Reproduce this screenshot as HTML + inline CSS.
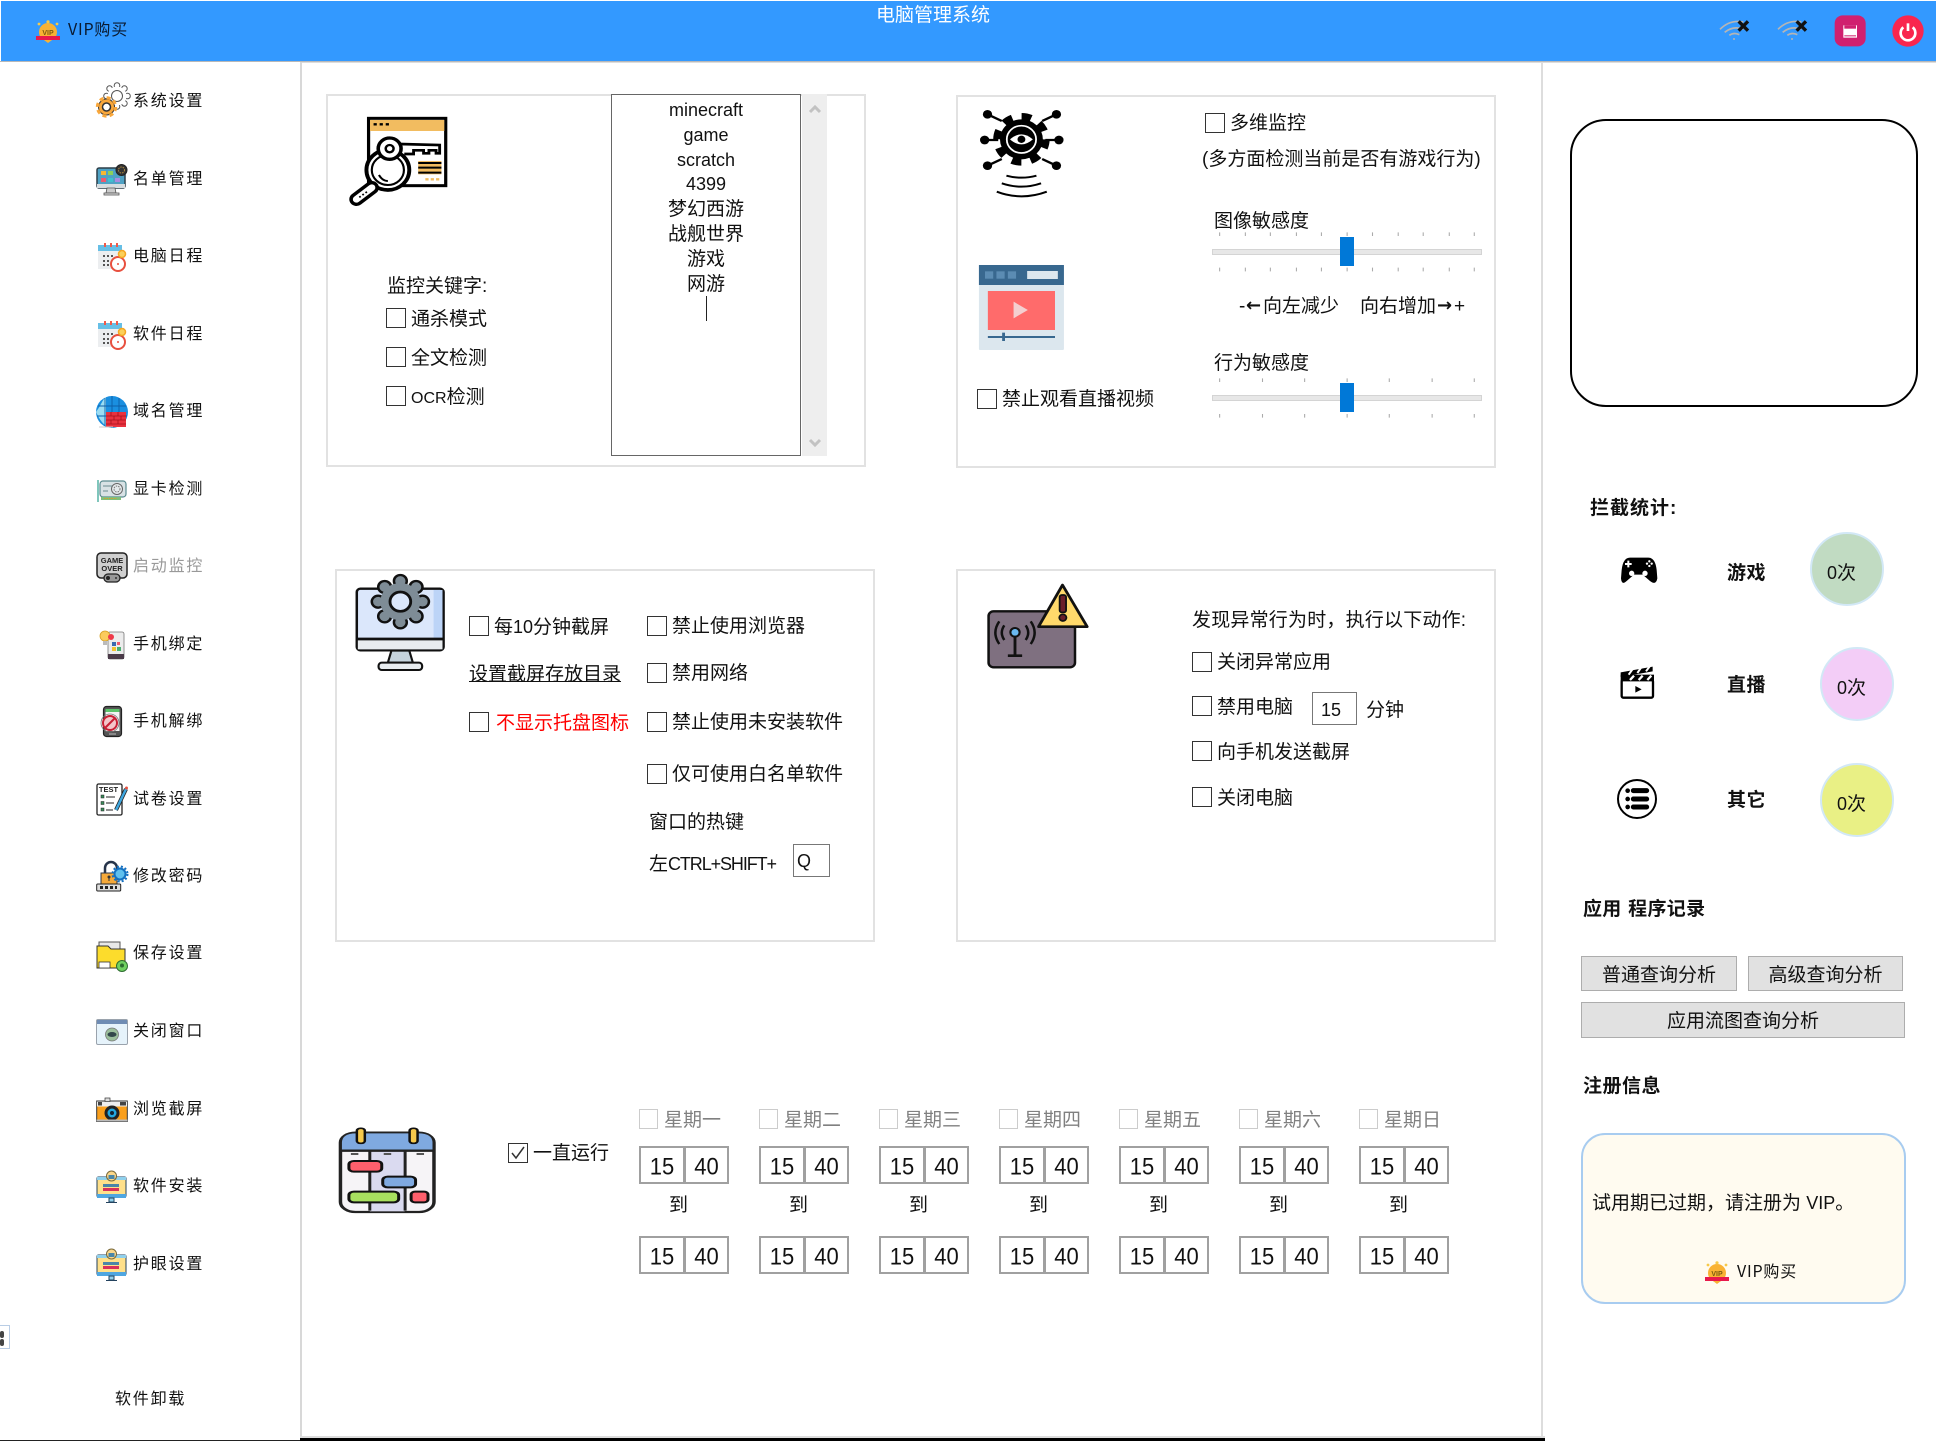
<!DOCTYPE html>
<html lang="zh"><head><meta charset="utf-8"><title>电脑管理系统</title>
<style>
html,body{margin:0;padding:0;background:#fff}
body{position:relative;width:1936px;height:1441px;overflow:hidden;font-family:"Liberation Sans","Noto Sans CJK SC",sans-serif;color:#111}
.t{position:absolute;white-space:nowrap;font-size:19px;line-height:24px;height:24px;margin-top:2px}
.n{position:absolute;left:133px;white-space:nowrap;font:16px/24px "WenQuanYi Zen Hei","Noto Sans CJK SC",sans-serif;letter-spacing:1.8px;color:#111;margin-top:-1px}
.b{font-weight:700}
.l{font-size:18px}
.o{font-size:16px}
.p{position:absolute;border:2px solid #e2e2e2;box-sizing:border-box}
.c{position:absolute;width:20px;height:20px;box-sizing:border-box;border:1.5px solid #333;background:#fff}
.d .c{border-color:#ccc;left:0;top:0;width:19px}
.d{position:absolute;top:1109px;width:100px;height:170px}
.d .t{color:#808080;left:25px;top:-2px}
.tb{position:absolute;left:0;width:90px;height:38px;box-sizing:border-box;border:2px solid #a0a0a0;background:#fff}
.tb i{position:absolute;top:0;left:42px;width:3px;height:34px;background:#a0a0a0}
.tb b{position:absolute;left:0;top:6px;font:22px/26px "Liberation Sans",sans-serif;color:#111;width:42px;text-align:center;transform:scaleY(1.1)}
.tb i+b{left:45px;width:41px}
.dao{position:absolute;left:30px;top:85px;font-size:19px;line-height:24px;color:#111}
.btn{position:absolute;box-sizing:border-box;background:#e1e1e1;border:1.5px solid #adadad;text-align:center;font-size:19px;line-height:33px;color:#111;padding-top:2px}
.in{position:absolute;box-sizing:border-box;border:1.5px solid #777;background:#fff}
.circ{position:absolute;box-sizing:border-box;width:74px;height:74px;border-radius:50%;border:2px solid #d2e8f6}
svg{position:absolute;left:0;top:0}
.a{font-family:"DejaVu Sans",sans-serif;font-weight:700;font-size:18px}
</style></head><body>
<div style="position:absolute;left:1px;top:1px;width:1935px;height:60px;background:#3399ff"></div>
<div style="position:absolute;left:0;top:61px;width:1936px;height:1px;background:#b8b8b8"></div>
<div style="position:absolute;left:300px;top:62px;width:1636px;height:1px;background:#ddd"></div>
<div style="position:absolute;left:300px;top:62px;width:2px;height:1375px;background:#d8d8d8"></div>
<div style="position:absolute;left:1541px;top:62px;width:2px;height:1379px;background:#ddd"></div>
<div style="position:absolute;left:300px;top:1436px;width:1245px;height:2px;background:#ddd"></div>
<div style="position:absolute;left:300px;top:1438px;width:1245px;height:3px;background:#000"></div>
<div style="position:absolute;left:0;top:1440px;width:300px;height:1px;background:#222"></div>

<div class="n" style="left:68px;top:17px;letter-spacing:.8px;color:#0a1a30">VIP购买</div>
<div class="t" style="left:876px;top:2px;font-size:19px;color:#fff">电脑管理系统</div>

<div class="n" style="top:88px">系统设置</div>
<div class="n" style="top:166px">名单管理</div>
<div class="n" style="top:243px">电脑日程</div>
<div class="n" style="top:321px">软件日程</div>
<div class="n" style="top:398px">域名管理</div>
<div class="n" style="top:476px">显卡检测</div>
<div class="n" style="top:553px;color:#999">启动监控</div>
<div class="n" style="top:631px">手机绑定</div>
<div class="n" style="top:708px">手机解绑</div>
<div class="n" style="top:786px">试卷设置</div>
<div class="n" style="top:863px">修改密码</div>
<div class="n" style="top:940px">保存设置</div>
<div class="n" style="top:1018px">关闭窗口</div>
<div class="n" style="top:1096px">浏览截屏</div>
<div class="n" style="top:1173px">软件安装</div>
<div class="n" style="top:1251px">护眼设置</div>
<div class="n" style="left:115px;top:1386px">软件卸载</div>

<div class="p" style="left:326px;top:94px;width:540px;height:373px"></div>
<div style="position:absolute;left:802px;top:94px;width:25px;height:362px;background:#eee"></div>
<div style="position:absolute;left:611px;top:94px;width:190px;height:362px;box-sizing:border-box;border:1.5px solid #666;background:#fff"></div>
<div class="t l" style="left:611px;width:190px;text-align:center;top:96px">minecraft</div>
<div class="t l" style="left:611px;width:190px;text-align:center;top:121px">game</div>
<div class="t l" style="left:611px;width:190px;text-align:center;top:146px">scratch</div>
<div class="t l" style="left:611px;width:190px;text-align:center;top:170px">4399</div>
<div class="t" style="left:611px;width:190px;text-align:center;top:196px">梦幻西游</div>
<div class="t" style="left:611px;width:190px;text-align:center;top:221px">战舰世界</div>
<div class="t" style="left:611px;width:190px;text-align:center;top:246px">游戏</div>
<div class="t" style="left:611px;width:190px;text-align:center;top:271px">网游</div>
<div style="position:absolute;left:706px;top:296px;width:1px;height:25px;background:#222"></div>
<div class="t" style="left:387px;top:273px">监控关键字:</div>
<div class="c" style="left:386px;top:308px"></div><div class="t" style="left:411px;top:306px">通杀模式</div>
<div class="c" style="left:386px;top:347px"></div><div class="t" style="left:411px;top:345px">全文检测</div>
<div class="c" style="left:386px;top:386px"></div><div class="t" style="left:411px;top:384px"><span class="o">OCR</span>检测</div>

<div class="p" style="left:956px;top:95px;width:540px;height:373px"></div>
<div class="c" style="left:1205px;top:113px"></div><div class="t" style="left:1230px;top:110px">多维监控</div>
<div class="t" style="left:1202px;top:146px">(多方面检测当前是否有游戏行为)</div>
<div class="t" style="left:1214px;top:208px">图像敏感度</div>
<div class="t" style="left:1239px;top:293px">-</div><div class="t a" style="left:1246px;top:292px">←</div><div class="t" style="left:1263px;top:293px">向左减少</div>
<div class="t" style="left:1360px;top:293px">向右增加</div><div class="t a" style="left:1437px;top:292px">→</div><div class="t" style="left:1454px;top:293px">+</div>
<div class="t" style="left:1214px;top:350px">行为敏感度</div>
<div class="c" style="left:977px;top:389px"></div><div class="t" style="left:1002px;top:386px">禁止观看直播视频</div>
<div style="position:absolute;left:1212px;top:249px;width:270px;height:6px;box-sizing:border-box;background:#e7e7e7;border:1px solid #d4d4d4"></div>
<div style="position:absolute;left:1340px;top:237px;width:14px;height:29px;background:#0078d7"></div>
<div style="position:absolute;left:1212px;top:395px;width:270px;height:6px;box-sizing:border-box;background:#e7e7e7;border:1px solid #d4d4d4"></div>
<div style="position:absolute;left:1340px;top:383px;width:14px;height:29px;background:#0078d7"></div>

<div class="p" style="left:335px;top:569px;width:540px;height:373px"></div>
<div class="c" style="left:469px;top:616px"></div><div class="t" style="left:494px;top:613px">每<span class="l">10</span>分钟截屏</div>
<div class="t" style="left:469px;top:661px;text-decoration:underline">设置截屏存放目录</div>
<div class="c" style="left:469px;top:712px"></div><div class="t" style="left:496px;top:710px;color:#f00">不显示托盘图标</div>
<div class="c" style="left:647px;top:616px"></div><div class="t" style="left:672px;top:613px">禁止使用浏览器</div>
<div class="c" style="left:647px;top:663px"></div><div class="t" style="left:672px;top:660px">禁用网络</div>
<div class="c" style="left:647px;top:712px"></div><div class="t" style="left:672px;top:709px">禁止使用未安装软件</div>
<div class="c" style="left:647px;top:764px"></div><div class="t" style="left:672px;top:761px">仅可使用白名单软件</div>
<div class="t" style="left:649px;top:809px">窗口的热键</div>
<div class="t" style="left:649px;top:850px">左<span class="l" style="letter-spacing:-1.1px">CTRL+SHIFT+</span></div>
<div class="in" style="left:793px;top:844px;width:37px;height:33px"></div><div class="t l" style="left:797px;top:847px">Q</div>

<div class="p" style="left:956px;top:569px;width:540px;height:373px"></div>
<div class="t" style="left:1192px;top:607px;letter-spacing:.2px">发现异常行为时，执行以下动作:</div>
<div class="c" style="left:1192px;top:652px"></div><div class="t" style="left:1217px;top:649px">关闭异常应用</div>
<div class="c" style="left:1192px;top:696px"></div><div class="t" style="left:1217px;top:694px">禁用电脑</div>
<div class="in" style="left:1312px;top:692px;width:45px;height:33px"></div><div class="t l" style="left:1321px;top:696px">15</div>
<div class="t" style="left:1366px;top:697px">分钟</div>
<div class="c" style="left:1192px;top:741px"></div><div class="t" style="left:1217px;top:739px">向手机发送截屏</div>
<div class="c" style="left:1192px;top:787px"></div><div class="t" style="left:1217px;top:785px">关闭电脑</div>

<div class="c" style="left:508px;top:1143px"></div>
<div class="t" style="left:533px;top:1140px">一直运行</div>

<div class="d" style="left:639px"><div class="c"></div><div class="t">星期一</div><div class="tb" style="top:37px"><b>15</b><i></i><b>40</b></div><div class="dao">到</div><div class="tb" style="top:127px"><b>15</b><i></i><b>40</b></div></div>
<div class="d" style="left:759px"><div class="c"></div><div class="t">星期二</div><div class="tb" style="top:37px"><b>15</b><i></i><b>40</b></div><div class="dao">到</div><div class="tb" style="top:127px"><b>15</b><i></i><b>40</b></div></div>
<div class="d" style="left:879px"><div class="c"></div><div class="t">星期三</div><div class="tb" style="top:37px"><b>15</b><i></i><b>40</b></div><div class="dao">到</div><div class="tb" style="top:127px"><b>15</b><i></i><b>40</b></div></div>
<div class="d" style="left:999px"><div class="c"></div><div class="t">星期四</div><div class="tb" style="top:37px"><b>15</b><i></i><b>40</b></div><div class="dao">到</div><div class="tb" style="top:127px"><b>15</b><i></i><b>40</b></div></div>
<div class="d" style="left:1119px"><div class="c"></div><div class="t">星期五</div><div class="tb" style="top:37px"><b>15</b><i></i><b>40</b></div><div class="dao">到</div><div class="tb" style="top:127px"><b>15</b><i></i><b>40</b></div></div>
<div class="d" style="left:1239px"><div class="c"></div><div class="t">星期六</div><div class="tb" style="top:37px"><b>15</b><i></i><b>40</b></div><div class="dao">到</div><div class="tb" style="top:127px"><b>15</b><i></i><b>40</b></div></div>
<div class="d" style="left:1359px"><div class="c"></div><div class="t">星期日</div><div class="tb" style="top:37px"><b>15</b><i></i><b>40</b></div><div class="dao">到</div><div class="tb" style="top:127px"><b>15</b><i></i><b>40</b></div></div>

<div style="position:absolute;left:1570px;top:119px;width:348px;height:288px;box-sizing:border-box;border:2px solid #000;border-radius:36px"></div>
<div class="t b" style="left:1590px;top:495px;letter-spacing:1px">拦截统计:</div>
<div class="t b" style="left:1727px;top:560px;letter-spacing:.5px">游戏</div>
<div class="t b" style="left:1727px;top:672px;letter-spacing:.5px">直播</div>
<div class="t b" style="left:1727px;top:787px;letter-spacing:.5px">其它</div>
<div class="circ" style="left:1810px;top:532px;background:#c1dbc2"></div><div class="t" style="left:1827px;top:559px"><span class="l">0</span>次</div>
<div class="circ" style="left:1820px;top:647px;background:#f3cdf7"></div><div class="t" style="left:1837px;top:674px"><span class="l">0</span>次</div>
<div class="circ" style="left:1820px;top:763px;background:#e9f085"></div><div class="t" style="left:1837px;top:790px"><span class="l">0</span>次</div>
<div class="t b" style="left:1583px;top:896px;word-spacing:1px;letter-spacing:.3px">应用 程序记录</div>
<div class="btn" style="left:1581px;top:956px;width:156px;height:35px">普通查询分析</div>
<div class="btn" style="left:1748px;top:956px;width:155px;height:35px">高级查询分析</div>
<div class="btn" style="left:1581px;top:1002px;width:324px;height:36px">应用流图查询分析</div>
<div class="t b" style="left:1583px;top:1073px;letter-spacing:.5px">注册信息</div>
<div style="position:absolute;left:1581px;top:1133px;width:325px;height:171px;box-sizing:border-box;border:2px solid #a8ccf0;border-radius:24px;background:#fffbf0"></div>
<div class="t" style="left:1592px;top:1189px">试用期已过期，请注册为 <span class="l">VIP</span>。</div>
<div class="n" style="left:1737px;top:1259px;letter-spacing:.8px">VIP购买</div>

<div style="position:absolute;left:0;top:1325px;width:10px;height:24px;box-sizing:border-box;border:1px solid #b9cde5;border-left:0;background:#fff"></div>

<svg width="1936" height="1441" viewBox="0 0 1936 1441" fill="none">
<defs>
<g id="vip"><circle cx="12" cy="12" r="9" fill="#f9b233"/><circle cx="3" cy="4" r="1.400" fill="#f7c948"/><circle cx="21" cy="4" r="1.400" fill="#f7c948"/><circle cx="12" cy="1.800" r="1.600" fill="#f7c948"/><text x="12" y="15" font-family="Liberation Sans" font-size="7" font-weight="700" text-anchor="middle" fill="#7a5a10">VIP</text><path d="M0 16h24v4h-24z" fill="#e8194b"/><path d="M8 20h8l-4 3z" fill="#f9b233"/></g>
<g id="cal"><rect x="1" y="3" width="24" height="24" fill="#eceef0"/><rect x="1" y="3" width="24" height="6" fill="#66bfe6"/><path d="M8 1v4M14 1v4M20 1v4" stroke="#ef5a4a" stroke-width="2"/><g fill="#555"><rect x="6" y="13" width="2" height="2"/><rect x="10" y="13" width="2" height="2"/><rect x="14" y="13" width="2" height="2"/><rect x="6" y="18" width="2" height="2"/><rect x="10" y="18" width="2" height="2"/><rect x="6" y="22" width="2" height="2"/><rect x="10" y="22" width="2" height="2"/></g><circle cx="21" cy="22" r="7" fill="#fff" stroke="#e8503f" stroke-width="2"/><circle cx="21" cy="22" r="1" fill="#e8503f"/><circle cx="25" cy="12" r="3.500" fill="#fbd05a" stroke="#f5a623" stroke-width="1.500"/></g>
<g id="mon"><rect x="1" y="6" width="29" height="20" rx="1.500" fill="#ffe08a" stroke="#23425e" stroke-width="1"/><rect x="1" y="6" width="29" height="3" fill="#8fd0ec"/><rect x="1" y="23" width="29" height="4" fill="#4fa6e0"/><rect x="7" y="13" width="16" height="3" fill="#4a86a8"/><rect x="7" y="17" width="16" height="3" fill="#d8305a"/><path d="M13 27h5v4h-5zM10 31.500h11" stroke="#23425e" fill="#8fd0ec"/><circle cx="15.500" cy="5" r="5" fill="#fbd78a" stroke="#7a6a3a"/><rect x="12.500" y="4" width="6" height="4" fill="#4a86a8"/></g>
</defs>

<use href="#vip" transform="translate(36,20)"/>
<use href="#vip" transform="translate(1705,1261)"/>

<!-- sidebar icons -->
<g transform="translate(96,85)">
<g fill="#fff" stroke="#555" stroke-width="1"><circle cx="21" cy="0.500" r="2.800"/><circle cx="28.400" cy="3.600" r="2.800"/><circle cx="31.500" cy="11" r="2.800"/><circle cx="28.400" cy="18.400" r="2.800"/><circle cx="21" cy="21.500" r="2.800"/><circle cx="13.600" cy="3.600" r="2.800"/><circle cx="10.500" cy="11" r="2.800"/></g>
<circle cx="21" cy="11" r="9.500" fill="#fff"/><circle cx="21" cy="11" r="5.500" stroke="#555" stroke-width="1"/>
<circle cx="10.500" cy="22" r="8" fill="#f9a73b" stroke="#3a3a3a" stroke-width="1"/><circle cx="10.500" cy="22" r="9.200" stroke="#f9a73b" stroke-width="3" stroke-dasharray="4 3.200"/><circle cx="10.500" cy="22" r="4" fill="#fff" stroke="#333" stroke-width="1.500"/>
</g>
<g transform="translate(96,164)">
<rect x="1" y="4" width="28" height="20" rx="2" fill="#4fa2c4" stroke="#2e3e48" stroke-width="1.500"/>
<rect x="5" y="7" width="5" height="4" fill="#f7b733"/><rect x="12" y="7" width="5" height="4" fill="#8bd05a"/><rect x="5" y="14" width="5" height="4" fill="#ef5a6f"/><rect x="12" y="14" width="5" height="4" fill="#3fc0d0"/><rect x="19" y="14" width="5" height="4" fill="#a88be0"/>
<rect x="1" y="20" width="28" height="4" fill="#d7dde0"/><path d="M11 24h8l1 5h-10z" fill="#ccc" stroke="#555" stroke-width=".8"/><rect x="8" y="29" width="15" height="2" fill="#ddd" stroke="#555" stroke-width=".8"/>
<circle cx="25.500" cy="6" r="5.500" fill="#333" stroke="#222"/><circle cx="25.500" cy="6" r="3" stroke="#b08a40" stroke-dasharray="1.500 1"/>
</g>
<use href="#cal" transform="translate(97,242)"/>
<use href="#cal" transform="translate(97,320)"/>
<g transform="translate(96,396)">
<circle cx="16" cy="16" r="16" fill="#1a8fe0"/><path d="M0 16C6 8 6 4 10 1L10 30C5 26 3 22 0 16z" fill="#9bdcf2"/><path d="M2 10h28M1 20h30M16 0v32M9 2v28M23 2v28" stroke="#0d5fa8" stroke-width=".9"/><rect x="10" y="16" width="20" height="15" fill="#e8323f"/><path d="M10 20h20M10 24h20M10 28h20M15 16v4M22 16v4M18 20v4M25 20v4M15 24v4M22 24v4" stroke="#a8101c" stroke-width=".8"/><path d="M3 31h14" stroke="#ccc"/>
</g>
<g transform="translate(97,478)">
<rect x="3" y="3" width="26" height="16" rx="3" fill="#d8e2e5" stroke="#5a8a8f" stroke-width="1.200"/><circle cx="20" cy="11" r="5.500" fill="#e4eaec" stroke="#666"/><circle cx="20" cy="11" r="3" stroke="#777" stroke-dasharray="1.500 1"/><path d="M6 8h9M6 13h5" stroke="#6a8a90"/><rect x="4" y="19" width="20" height="3" fill="#7fbf7a"/><path d="M7 20.500h13" stroke="#d0a030" stroke-dasharray="1.500 1"/><path d="M1 2v22" stroke="#2aa090" stroke-width="1.200"/>
</g>
<g transform="translate(96,552)">
<rect x="1" y="1" width="30" height="25" rx="4" fill="#cfcfcf" stroke="#222" stroke-width="1.500"/>
<text x="16" y="11" font-family="Liberation Sans" font-size="7.500" font-weight="700" text-anchor="middle" fill="#222">GAME</text>
<text x="16" y="19" font-family="Liberation Sans" font-size="7.500" font-weight="700" text-anchor="middle" fill="#222">OVER</text>
<rect x="8" y="22" width="16" height="8" rx="4" fill="#999" stroke="#222" stroke-width="1.300"/><circle cx="12" cy="26" r="2" fill="#222"/><circle cx="20" cy="26" r="1" fill="#333"/>
</g>
<g transform="translate(96,629)">
<rect x="12" y="3" width="16" height="27" rx="2" fill="#ececec" stroke="#777" stroke-width=".8"/><rect x="12" y="25" width="16" height="5" fill="#4a3a48"/>
<rect x="16" y="13" width="4" height="4" fill="#3a6ab0"/><rect x="21" y="13" width="3" height="3" fill="#ef5a6f"/><rect x="16" y="18" width="4" height="4" fill="#f2c230"/><rect x="21" y="18" width="4" height="4" fill="#4ab070"/>
<circle cx="9" cy="7" r="5" fill="#fbcb5c" stroke="#d8a020" stroke-width=".8"/><rect x="7" y="12" width="4" height="4" fill="#bbb"/><circle cx="15" cy="8" r="3" fill="#ef3a4a"/>
</g>
<g transform="translate(96,705)">
<rect x="7.500" y="1.500" width="18" height="30" rx="3" fill="#555" stroke="#222" stroke-width="1.200"/><rect x="9.500" y="4" width="14" height="3" fill="#5cc46a"/><rect x="9.500" y="7" width="14" height="19" fill="#f4f4f4"/><rect x="13" y="28" width="7" height="2" fill="#888"/>
<circle cx="14" cy="18" r="7" fill="#f4c6ca" stroke="#c82034" stroke-width="2"/><path d="M9 23l10-10" stroke="#c82034" stroke-width="2"/><circle cx="14" cy="18" r="9" stroke="#777" stroke-width=".8"/>
</g>
<g transform="translate(96,783)">
<rect x="1" y="1" width="25" height="31" rx="1.500" fill="#fff" stroke="#222" stroke-width="1.300"/>
<text x="12.500" y="9" font-family="Liberation Sans" font-size="7.500" font-weight="700" text-anchor="middle" fill="#222">TEST</text>
<rect x="5" y="12" width="3" height="3" fill="#3a8a5a" stroke="#222" stroke-width=".5"/><rect x="5" y="18.500" width="3" height="3" fill="#3a8a5a" stroke="#222" stroke-width=".5"/><rect x="5" y="25" width="3" height="3" fill="#3a8a5a" stroke="#222" stroke-width=".5"/>
<path d="M10 14h9M10 20h8M10 27h7" stroke="#222" stroke-width="1"/>
<path d="M30 6L20 27" stroke="#222" stroke-width="4"/><path d="M30 6L20 27" stroke="#3fa7e0" stroke-width="2.500"/><circle cx="30.500" cy="5" r="1.500" fill="#e8503f"/>
</g>
<g transform="translate(96,861)">
<path d="M9 12V7a6 6 0 0 1 12 0v5" stroke="#27344a" stroke-width="2.500"/><rect x="5" y="12" width="16" height="11" fill="#f5a93a" stroke="#27344a" stroke-width="1"/><circle cx="13" cy="16" r="1.500" fill="#333"/><path d="M13 16v4" stroke="#333"/>
<circle cx="24" cy="13" r="5.500" fill="#5fc0ee" stroke="#1470c0" stroke-width="2"/><circle cx="24" cy="13" r="7.500" stroke="#1470c0" stroke-width="2" stroke-dasharray="2 2"/>
<rect x=".700" y="23" width="24" height="7" rx="1" fill="#ddd" stroke="#222"/><path d="M4 26.500h17" stroke="#222" stroke-width="3" stroke-dasharray="3 2"/>
</g>
<g transform="translate(96,941)">
<rect x="3" y="1" width="21" height="8" fill="#e8e8e8" stroke="#555" stroke-width="1"/><path d="M1 5h11l3 3h14v19H1z" fill="#fcdc2c" stroke="#333" stroke-width="1"/><rect x="3" y="21" width="11" height="6" fill="#fff" stroke="#333" stroke-width=".8"/><circle cx="26" cy="25" r="5.500" fill="#6fd060" stroke="#2d6d30"/><circle cx="26" cy="24.500" r="2" fill="#2d6d30"/>
</g>
<g transform="translate(96,1019)">
<rect x=".500" y=".500" width="31" height="25" rx="1.500" fill="#e6f3fb" stroke="#9aa3ad" stroke-width="1"/><rect x="1" y="1" width="30" height="4" fill="#6f8cb4"/><circle cx="16" cy="15.500" r="6.500" fill="#9cbf9c" stroke="#777" stroke-width=".8"/><ellipse cx="16" cy="15.500" rx="4.500" ry="2.500" fill="#33474a"/>
</g>
<g transform="translate(96,1098)">
<rect x=".700" y="3" width="30.600" height="20.500" fill="#fa9f1c" stroke="#333" stroke-width="1"/><rect x="1" y="3.500" width="30" height="5" fill="#eee"/><rect x="9" y="0" width="5" height="3.500" fill="#ddd" stroke="#333" stroke-width=".7"/><rect x="24" y="4" width="6" height="3.500" fill="#444"/><rect x="2" y="4" width="4" height="3.500" fill="#444"/><circle cx="16" cy="15" r="7.500" fill="#222"/><circle cx="16" cy="15" r="4.500" fill="#22a8e0"/><circle cx="16" cy="15" r="2" fill="#123"/><rect x=".700" y="21.500" width="30.600" height="2" fill="#bbb"/>
</g>
<use href="#mon" transform="translate(96,1171)"/>
<use href="#mon" transform="translate(96,1249)"/>
<rect x="0" y="1331" width="4" height="7" rx="2" fill="#444"/><rect x="0" y="1339" width="4" height="7" rx="2" fill="#444"/>

<!-- key icon -->
<g transform="translate(320,80) scale(.35714,.33333)">
<rect x="136" y="115" width="216" height="202" fill="#fff" stroke="#000" stroke-width="9"/>
<rect x="140" y="120" width="208" height="33" fill="#f2bc60"/>
<path d="M150 133h45" stroke="#000" stroke-width="7" stroke-dasharray="9 8"/>
<rect x="275" y="243" width="65" height="40" fill="#f2bc60"/><path d="M275 249h65M275 263h65M275 278h65" stroke="#000" stroke-width="6"/>
<path d="M295 298h40" stroke="#f2bc60" stroke-width="7" stroke-dasharray="9 6"/>
<path d="M222 192L335 195V220H325V211H305V220H290V211H262V222H236" fill="#fff" stroke="#000" stroke-width="8"/>
<circle cx="190" cy="270" r="60" fill="#fff" stroke="#000" stroke-width="11"/>
<path d="M145 270a45 45 0 0 0 90 0a45 45 0 0 0-90 0" stroke="#000" stroke-width="6"/><path d="M165 285q10 18 25 18" stroke="#000" stroke-width="6"/>
<circle cx="195" cy="206" r="32" fill="#fff" stroke="#000" stroke-width="10"/><circle cx="195" cy="206" r="11" stroke="#000" stroke-width="7"/>
<path d="M145 323L102 358" stroke="#000" stroke-width="40" stroke-linecap="round"/><path d="M145 323L102 358" stroke="#fff" stroke-width="20" stroke-linecap="round"/><path d="M110 352l22-17" stroke="#000" stroke-width="5" stroke-dasharray="5 6"/>
</g>
<!-- scrollbar arrows -->
<path d="M810 112l5-5 5 5" stroke="#c2c2c2" stroke-width="3"/><path d="M810 440l5 5 5-5" stroke="#c2c2c2" stroke-width="3"/>

<!-- eye gear -->
<g transform="translate(950,80) scale(.35714,.33333)">
<circle cx="200" cy="178" r="60" fill="#000"/><circle cx="200" cy="178" r="68" stroke="#000" stroke-width="22" stroke-dasharray="27 26.400"/>
<circle cx="200" cy="178" r="41" stroke="#fff" stroke-width="5"/><path d="M168 178q32-30 64 0q-32 30-64 0z" fill="#fff"/><circle cx="200" cy="178" r="11" fill="#000"/>
<path d="M105 103l40 20M298 103l-40 20M97 180h38M305 180h-38M105 257l40-20M298 257l-40-20" stroke="#000" stroke-width="7"/>
<g fill="#000"><circle cx="105" cy="103" r="13"/><circle cx="298" cy="103" r="13"/><circle cx="97" cy="180" r="13"/><circle cx="305" cy="180" r="13"/><circle cx="105" cy="257" r="13"/><circle cx="298" cy="257" r="13"/></g>
<path d="M158 287q42 12 84 0M145 310q55 20 110 0M131 335q69 28 140 0" stroke="#000" stroke-width="6"/>
<rect x="81" y="555" width="238" height="255" rx="3" fill="#dce7ee"/><rect x="81" y="555" width="238" height="60" fill="#38688f"/>
<g fill="#5b8cb3"><rect x="98" y="574" width="23" height="22"/><rect x="130" y="574" width="23" height="22"/><rect x="162" y="574" width="23" height="22"/></g>
<rect x="216" y="573" width="86" height="24" fill="#dce7ee"/><rect x="106" y="633" width="188" height="117" fill="#ff6b6b"/>
<path d="M178 665v50l40-25z" fill="#f4cfd0"/><path d="M106 771h188" stroke="#38688f" stroke-width="6"/><path d="M150 758v25" stroke="#38688f" stroke-width="8"/>
<path d="M755 457v11M827 457v11M897 457v11M970 457v11M1040 457v11M1112 457v11M1183 457v11M1255 457v11M1325 457v11M1398 457v11M1468 457v11M755 563v11M827 563v11M897 563v11M970 563v11M1040 563v11M1112 563v11M1183 563v11M1255 563v11M1325 563v11M1398 563v11M1468 563v11M755 895v11M875 895v11M993 895v11M1112 895v11M1230 895v11M1350 895v11M1468 895v11M755 1002v11M875 1002v11M993 1002v11M1112 1002v11M1230 1002v11M1350 1002v11M1468 1002v11" stroke="#aaa" stroke-width="3"/>
</g>

<!-- monitor gear -->
<g transform="translate(330,560) scale(.35714,.33333)">
<rect x="75" y="86" width="243" height="185" rx="10" fill="#dbe7fb" stroke="#111" stroke-width="7"/><rect x="290" y="90" width="25" height="146" fill="#bcd4f7"/><rect x="78" y="238" width="237" height="30" fill="#e8ecef"/><path d="M75 237h243" stroke="#111" stroke-width="8"/>
<path d="M172 272h50l10 36h-70z" fill="#c5d3dc" stroke="#111" stroke-width="6"/><rect x="136" y="308" width="122" height="22" rx="9" fill="#e8ecef" stroke="#111" stroke-width="6"/>
<g fill="#7e8c96" stroke="#111" stroke-width="7"><circle cx="197" cy="63" r="18"/><circle cx="241" cy="81" r="18"/><circle cx="259" cy="125" r="18"/><circle cx="241" cy="169" r="18"/><circle cx="197" cy="187" r="18"/><circle cx="153" cy="169" r="18"/><circle cx="135" cy="125" r="18"/><circle cx="153" cy="81" r="18"/></g>
<circle cx="197" cy="125" r="56" fill="#7e8c96"/><circle cx="197" cy="125" r="29" fill="#dbe7fb" stroke="#111" stroke-width="8"/>
</g>

<!-- warning -->
<g transform="translate(950,560) scale(.35714,.33333)">
<rect x="108" y="154" width="242" height="168" rx="14" fill="#7f7080" stroke="#111" stroke-width="7"/>
<circle cx="182" cy="217" r="13" fill="#6ab8f0" stroke="#111" stroke-width="6"/><path d="M182 232v55M162 287h40" stroke="#111" stroke-width="8"/>
<path d="M152 196q-14 22 0 44M212 196q14 22 0 44M138 184q-22 34 0 68M226 184q22 34 0 68" stroke="#111" stroke-width="7"/>
<path d="M315 75L384 200H248Z" fill="#ffd96b" stroke="#111" stroke-width="8" stroke-linejoin="round"/>
<rect x="307" y="105" width="18" height="52" rx="6" fill="#6b1f2a" stroke="#111" stroke-width="5"/><circle cx="316" cy="173" r="10" fill="#6b1f2a" stroke="#111" stroke-width="5"/>
</g>

<!-- always-run check -->
<path d="M512 1153l4 5 8-11" stroke="#333" stroke-width="1.500"/>

<!-- schedule icon -->
<g transform="translate(330,1090) scale(.4975,.33333)">
<rect x="21" y="128" width="188" height="238" rx="30" fill="#f6f4f7" stroke="#222" stroke-width="7"/>
<rect x="80" y="180" width="70" height="184" fill="#dadaf0"/>
<path d="M24 180V158Q24 130 52 130H178Q206 130 206 158V180Z" fill="#7fa9e0"/><path d="M21 182H209" stroke="#222" stroke-width="7"/>
<path d="M80 182V362M151 182V362" stroke="#222" stroke-width="6"/><path d="M42 192h15M108 192h15M174 192h15" stroke="#555" stroke-width="6"/>
<rect x="38" y="213" width="66" height="32" rx="10" fill="#fe5f6c" stroke="#111" stroke-width="6"/><rect x="106" y="260" width="66" height="32" rx="10" fill="#7fa9e0" stroke="#111" stroke-width="6"/><rect x="38" y="305" width="100" height="32" rx="10" fill="#a8e05f" stroke="#111" stroke-width="6"/><rect x="163" y="305" width="34" height="32" rx="8" fill="#fe5f6c" stroke="#111" stroke-width="6"/>
<rect x="54" y="115" width="16" height="45" rx="7" fill="#f6c94c" stroke="#111" stroke-width="5"/><rect x="160" y="115" width="16" height="45" rx="7" fill="#f6c94c" stroke="#111" stroke-width="5"/>
</g>

<!-- stat icons -->
<g transform="translate(1530,470) scale(.33333)">
<path d="M300 263H355Q376 263 380 300L382 325Q378 347 360 333L338 314H312L290 333Q275 347 273 325L275 300Q279 263 300 263Z" fill="#000"/>
<path d="M295 272v20M285 282h20" stroke="#fff" stroke-width="6"/><g fill="#fff"><circle cx="358" cy="274" r="3.500"/><circle cx="358" cy="288" r="3.500"/><circle cx="351" cy="281" r="3.500"/><circle cx="365" cy="281" r="3.500"/><circle cx="305" cy="310" r="8"/><circle cx="345" cy="310" r="8"/></g>
<rect x="275" y="630" width="94" height="53" rx="5" fill="#fff" stroke="#000" stroke-width="7"/><rect x="272" y="614" width="100" height="20" fill="#000"/><path d="M300 630l12-13M326 630l12-13M352 630l12-13" stroke="#fff" stroke-width="7"/>
<path d="M272 607L368 590V604L272 621Z" fill="#000"/><path d="M296 614l12-17M322 609l12-17M348 604l12-16" stroke="#fff" stroke-width="6"/><path d="M316 648v20l19-10z" fill="#000"/>
<circle cx="321" cy="987" r="57" fill="#fff" stroke="#000" stroke-width="6"/>
<path d="M310 962h40M310 987h40M310 1011h40" stroke="#000" stroke-width="15" stroke-linecap="round"/><g fill="#000"><circle cx="293" cy="962" r="7"/><circle cx="293" cy="987" r="7"/><circle cx="293" cy="1011" r="7"/></g>
</g>

<!-- header right -->
<g transform="translate(1530,0) scale(.33333)">
<g stroke="#b5b5b5" stroke-width="5"><path d="M570 88Q600 58 640 66M584 97Q610 76 640 88M598 106Q612 96 628 104"/><circle cx="612" cy="117" r="3" fill="#b5b5b5" stroke="none"/></g><path d="M626 64l28 28M654 64l-28 28" stroke="#111" stroke-width="10"/>
<g stroke="#b5b5b5" stroke-width="5"><path d="M744 88Q774 58 814 66M758 97Q784 76 814 88M772 106Q786 96 802 104"/><circle cx="786" cy="117" r="3" fill="#b5b5b5" stroke="none"/></g><path d="M800 64l28 28M828 64l-28 28" stroke="#111" stroke-width="10"/>
<rect x="914" y="46" width="93" height="93" rx="24" fill="#d0206f"/><rect x="940" y="76" width="41" height="37" fill="#fff"/><rect x="943" y="76" width="35" height="10" fill="#d0206f"/><rect x="943" y="106" width="35" height="3" fill="#d0206f"/>
<circle cx="1134" cy="93" r="47" fill="#f9264e"/><path d="M1120 82A22 22 0 1 0 1148 82" stroke="#fff" stroke-width="8"/><path d="M1134 70V93" stroke="#fff" stroke-width="8"/>
</g>
</svg>
</body></html>
